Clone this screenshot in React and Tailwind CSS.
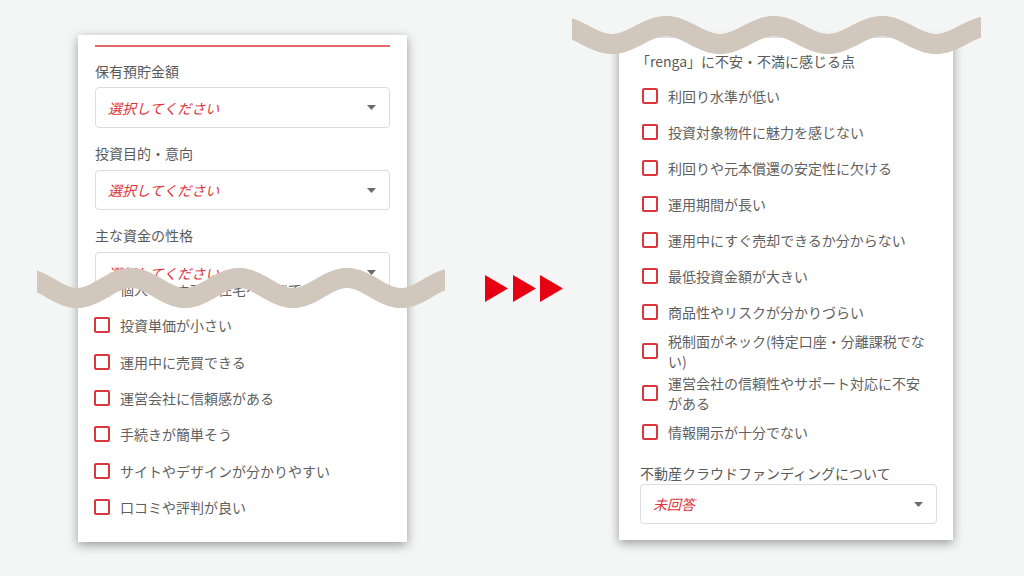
import React from "react";

const FONT = { fontFamily: '"Noto Sans CJK JP", "Noto Sans", sans-serif' };

function wavePath(w, amp, cy, period, crestX) {
  let d = "";
  for (let x = -20; x <= w + 20; x += 2) {
    const y = cy - amp * Math.cos((2 * Math.PI * (x - crestX)) / period);
    d += (x === -20 ? "M" : "L") + x + " " + y.toFixed(2) + " ";
  }
  return d;
}

const LEFT_WAVE = wavePath(408, 10, 21, 108, 94);
const RIGHT_WAVE = wavePath(409, 9, 20, 108, 94);

function Caret() {
  return (
    <svg width="9" height="5" viewBox="0 0 9 5" className="shrink-0">
      <path d="M0 0 L9 0 L4.5 5 Z" fill="#6b6b6b" />
    </svg>
  );
}

function Select({ text, h }) {
  return (
    <div
      className={`flex shrink-0 items-center justify-between border border-[#dcdcdc] rounded-[4px] bg-white pl-[12px] pr-[13px] ${h}`}
    >
      <span className="text-[14px] italic text-[#e0343c] leading-[20px]">{text}</span>
      <Caret />
    </div>
  );
}

function Box() {
  return <span className="w-[16px] h-[16px] border-2 border-[#d9363e] rounded-[2px] bg-white shrink-0" />;
}

function LeftRow({ text }) {
  return (
    <div className="flex shrink-0 items-center h-[36.3px] pl-[16px] gap-[10px]">
      <Box />
      <span className="text-[14px] leading-[20px] text-[#5f5f5f] whitespace-nowrap">{text}</span>
    </div>
  );
}

function RightRow({ text, two }) {
  return (
    <div className={`flex shrink-0 items-center pl-[2px] gap-[10px] ${two ? "h-[42px]" : "h-[36px]"}`}>
      <Box />
      <span className="text-[14px] leading-[20px] text-[#5f5f5f] max-w-[262px]">{text}</span>
    </div>
  );
}

function Label({ children, cls = "" }) {
  return <div className={`shrink-0 text-[14px] leading-[20px] text-[#5a5a5a] ${cls}`}>{children}</div>;
}

export default function App() {
  const leftRows = [
    "個人でも手軽に住宅へ投資できる",
    "投資単価が小さい",
    "運用中に売買できる",
    "運営会社に信頼感がある",
    "手続きが簡単そう",
    "サイトやデザインが分かりやすい",
    "口コミや評判が良い",
  ];
  const rightRows = [
    ["利回り水準が低い"],
    ["投資対象物件に魅力を感じない"],
    ["利回りや元本償還の安定性に欠ける"],
    ["運用期間が長い"],
    ["運用中にすぐ売却できるか分からない"],
    ["最低投資金額が大きい"],
    ["商品性やリスクが分かりづらい"],
    ["税制面がネック(特定口座・分離課税でない)", true],
    ["運営会社の信頼性やサポート対応に不安がある", true],
    ["情報開示が十分でない"],
  ];

  return (
    <div className="w-[1024px] h-[576px] bg-[#f4f6f6] flex items-start pl-[78px] overflow-hidden" style={FONT}>
      {/* Left card */}
      <div className="relative mt-[35px] w-[329px] h-[507px] bg-white shadow-[0_3px_10px_rgba(0,0,0,0.38)] shrink-0">
        <div className="h-[250px] overflow-hidden px-[17px] pt-[10px]">
          <div className="h-[2px] bg-[#e36a6a]" />
          <Label cls="mt-[14px]">保有預貯金額</Label>
          <div className="mt-[6px]">
            <Select text="選択してください" h="h-[41px]" />
          </div>
          <Label cls="mt-[15px]">投資目的・意向</Label>
          <div className="mt-[7px]">
            <Select text="選択してください" h="h-[40px]" />
          </div>
          <Label cls="mt-[15px]">主な資金の性格</Label>
          <div className="mt-[7px]">
            <Select text="選択してください" h="h-[41px]" />
          </div>
        </div>
        <div className="overflow-hidden h-[257px]">
          <div className="mt-[-14px]">
            {leftRows.map((t) => (
              <LeftRow key={t} text={t} />
            ))}
          </div>
        </div>
        <svg
          className="absolute left-[-41px] top-[232px]"
          width="408"
          height="42"
          viewBox="0 0 408 42"
        >
          <path d={LEFT_WAVE} fill="none" stroke="#d1c7bd" strokeWidth="20" />
        </svg>
      </div>

      {/* Arrows */}
      <div className="flex mt-[275px] ml-[78px] gap-[4.5px] shrink-0">
        {[0, 1, 2].map((i) => (
          <svg key={i} width="23" height="27" viewBox="0 0 23 27">
            <path d="M0 0 L23 13.5 L0 27 Z" fill="#e60012" />
          </svg>
        ))}
      </div>

      {/* Right card */}
      <div className="relative mt-[38px] ml-[56px] w-[334px] h-[502px] bg-white shadow-[0_3px_10px_rgba(0,0,0,0.38)] shrink-0">
        <div className="pl-[21px] pr-[16px] pt-[13px]">
          <Label cls="-ml-[4px]">「renga」に不安・不満に感じる点</Label>
          <div className="mt-[7px]">
            {rightRows.map(([t, two]) => (
              <RightRow key={t} text={t} two={two} />
            ))}
          </div>
          <Label cls="mt-[13px]">不動産クラウドファンディングについて</Label>
          <div className="mt-[1px]">
            <Select text="未回答" h="h-[40px]" />
          </div>
        </div>
        <svg
          className="absolute left-[-47px] top-[-23px]"
          width="409"
          height="40"
          viewBox="0 0 409 40"
        >
          <path d={RIGHT_WAVE} fill="none" stroke="#d1c7bd" strokeWidth="20" />
        </svg>
      </div>
    </div>
  );
}
